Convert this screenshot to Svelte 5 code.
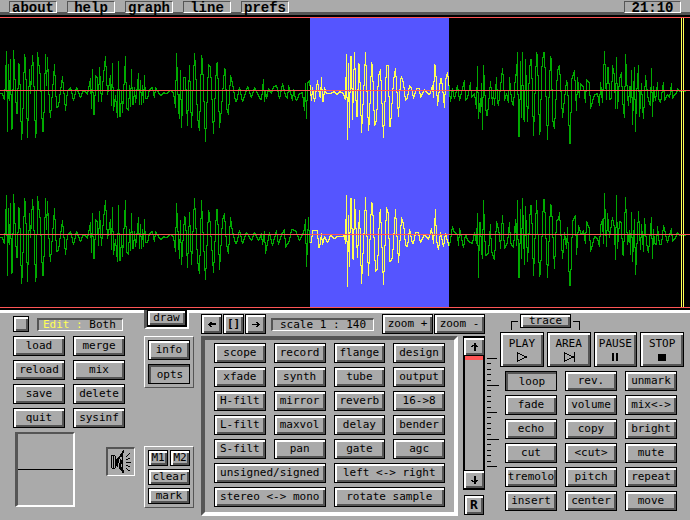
<script>
  const menus = ['about', 'help', 'graph', 'line', 'prefs'];
  const files = ['load', 'merge', 'reload', 'mix', 'save', 'delete', 'quit', 'sysinf'];
  const tools = [
    'scope', 'record', 'flange', 'design',
    'xfade', 'synth', 'tube', 'output',
    'H-filt', 'mirror', 'reverb', '16->8',
    'L-filt', 'maxvol', 'delay', 'bender',
    'S-filt', 'pan', 'gate', 'agc'
  ];
  const wideTools = ['unsigned/signed', 'left <-> right', 'stereo <-> mono', 'rotate sample'];
  const edits = [
    'loop', 'rev.', 'unmark',
    'fade', 'volume', 'mix<->',
    'echo', 'copy', 'bright',
    'cut', '<cut>', 'mute',
    'tremolo', 'pitch', 'repeat',
    'insert', 'center', 'move'
  ];
  const transport = [
    ['PLAY', 'M1 1V9L10 5Z'],
    ['AREA', 'M1 1V9L10 5ZM11 0V10'],
    ['PAUSE', 'M3 1V9M4 1V9M7 1V9M8 1V9'],
    ['STOP', 'M2 2H9V8H2ZM3 3H8V7H3ZM4 4H7V6H4ZM4 5H7']
  ];

  // Samples as "x,amplitude" pairs, amplitude growing downwards from the axis.
  const intro =
    '0,3 2,3 4,9 5,-11 6,-39 7,41 8,-26 9,10 10,-31 11,39 12,37 13,-40 14,-23 16,23 17,23 18,-27 19,-25 21,49 22,36 24,-36 25,-30 27,47 29,-21 30,3 32,-35 33,-21 35,47 36,38 37,-38 38,-29 40,-13 42,41 43,41 45,-36 46,-5 47,-33 49,16 50,27 54,-26 56,17 58,16 60,0 62,-14 65,20 67,0 70,-3 73,10 76,-3 80,7 83,0 85,1 87,4 90,-12 91,18 92,-21 93,24 94,24 95,-15 97,-13 98,11 99,-23 101,11 103,-16 105,-34 106,-14 107,4 110,-15 111,15 112,-27 113,20 115,5 117,27 118,-29 119,26 120,26 121,0 122,22 124,-15 125,-34 126,17 128,20 129,-5 130,16 131,-21 132,14 133,14 134,-3 135,12 137,-5 138,-17 139,14 140,-10 141,14 142,-5 143,12 144,-15 145,8 147,8 149,-1 152,-3 154,7 155,-3 158,2 161,5 163,2 166,3 170,0 173,2 174,9 175,17';
  const left =
    intro +
    ' 176,-37 178,18 179,28 180,-20 181,37 183,-13 185,-13 187,35 189,-25 191,37 194,-37 195,-23 197,26 199,40 201,-35 202,-30 205,51 208,-26 210,-24 213,43 216,-27 217,-28 219,37 221,18 224,-22 225,-20 226,17 228,24 230,-15 232,-7 235,11 236,11 239,-3 242,11 247,-4 251,7 254,-3 257,3 260,9 261,9 263,-11 264,11 265,0 266,8 268,-2 271,3 273,-4 276,-5 279,8 282,-7 285,5 287,8 288,-5 292,10 293,-1 295,8 296,10 299,3 302,2 304,20 305,-7 306,28 307,-8 309,-10 310,0 311,10 312,-3 314,11 316,-3 317,-10 319,4 320,7 321,-13 322,11 323,11 324,-3 326,3 330,3 334,1 336,4 339,1 343,3 345,9 346,-36 347,49 348,-27 349,37 350,-34 351,-34 352,29 354,-38 356,26 357,25 358,-27 359,-25 361,42 364,-15 365,-38 368,40 369,27 371,-28 372,-24 374,35 376,30 378,-15 380,-21 383,47 386,-25 388,-25 389,36 390,36 393,-10 395,-22 398,26 400,-10 401,-14 403,-8 405,10 407,7 409,-5 411,-3 413,8 416,-2 419,-2 420,7 424,-1 429,4 432,-5 433,7 434,-26 435,-24 437,15 440,-12 441,-12 444,17 445,-10 447,-18 448,-10 450,11 452,-2 454,8 457,-5 459,10 464,-10 465,10 467,7 470,-8 471,7 474,3 476,18 477,-24 478,28 479,13 480,22 481,-7 482,39 483,-25 485,15 486,25 487,25 490,-9 492,14 493,0 494,15 496,-13 497,10 498,15 502,-22 503,-10 504,10 506,3 508,12 509,-13 511,10 513,15 515,-16 516,-15 517,-38 518,46 519,46 520,-29 521,27 522,-38 523,27 524,31 525,-31 527,31 529,-20 530,-31 531,-31 533,45 536,-38 537,-35 539,44 540,38 541,-20 543,-38 544,-38 547,49 550,-34 551,-31 552,28 554,38 557,-20 559,-25 562,27 566,-10 567,-7 568,17 569,53 570,53 571,-10 574,-20 576,20 577,-13 579,7 580,-7 583,-4 585,12 586,-11 589,-8 590,18 592,11 594,4 597,3 599,15 600,-8 602,12 604,-39 605,-14 606,9 607,-23 608,-23 609,9 611,7 612,-25 614,-15 615,18 616,-33 617,18 619,-12 621,-18 622,10 624,27 625,-36 627,5 628,15 629,-4 630,12 631,-20 632,34 634,-23 635,41 636,5 638,-25 639,26 641,-7 642,15 643,28 645,-15 647,4 648,10 650,15 651,-22 652,26 653,-4 655,10 657,-8 658,8 660,12 663,-8 664,10 667,4 669,7 671,-7 672,8 674,4 676,3 677,-2 680,1 690,0';
  const right =
    intro +
    ' 176,-31 177,-12 179,24 180,-14 181,30 184,-18 185,-16 187,33 189,-22 191,30 194,-36 197,25 199,39 201,-34 202,-12 205,45 208,-24 209,-20 213,38 216,-25 217,-25 219,35 222,-14 224,-21 226,10 228,19 230,-17 232,-3 235,9 236,9 239,-4 242,9 246,-2 251,6 254,-2 258,6 261,-1 262,10 264,-3 265,19 267,8 269,-2 272,11 276,-4 278,10 281,0 284,-5 285,13 289,6 291,-5 295,-4 299,6 302,0 304,-6 305,-15 306,32 308,-17 309,8 311,8 312,-4 317,-4 318,12 319,13 321,-1 322,10 324,2 327,8 330,1 334,4 337,2 341,2 344,1 345,9 346,-39 347,52 348,-19 349,32 350,-36 351,-36 352,23 353,25 354,-35 357,23 359,-24 361,49 364,-11 365,-37 368,41 371,-32 372,-30 375,37 377,34 379,-20 380,-25 383,50 386,-27 388,-20 389,27 390,27 392,23 395,-25 398,28 401,-17 403,-11 405,10 407,12 409,-5 412,9 413,9 415,-2 418,-2 420,8 424,0 428,5 431,-6 433,9 435,-25 436,6 438,15 440,-2 443,12 445,-1 448,10 449,11 452,-8 454,-2 457,0 458,11 459,-6 463,13 465,0 468,7 472,9 474,-2 476,9 477,-21 478,43 479,-12 480,-12 481,15 482,24 483,-34 485,21 488,18 490,-10 491,17 494,25 496,-13 499,0 500,14 502,-19 504,14 507,8 509,-12 510,8 513,13 515,-15 516,11 517,-34 518,43 519,43 520,-25 521,24 522,-36 524,30 525,-28 527,27 530,-29 531,-29 533,41 536,-34 537,-14 539,42 540,38 543,-35 544,-35 547,43 550,-30 551,-28 554,34 556,-14 558,-15 559,-22 562,24 564,-2 566,14 567,-7 569,51 570,51 572,-13 575,-19 576,20 578,-9 581,0 583,-4 585,9 586,-13 589,-6 590,17 592,10 594,2 597,4 599,12 600,-8 602,-15 603,9 604,-41 605,-10 606,12 607,-21 609,3 612,-17 614,-6 615,25 616,-39 617,14 619,-13 621,-12 622,19 623,21 625,-37 627,10 629,-4 630,20 631,-22 632,27 634,-15 635,40 638,-23 640,15 641,-10 643,17 644,-16 646,8 648,18 651,-17 652,24 653,-5 654,9 656,10 657,-8 659,10 661,10 663,-9 666,4 667,8 669,0 671,-6 672,7 675,3 677,-2 680,1 690,0';

  // One vertical bar per column, covering the signal's range within it.
  function trace(data, axis) {
    const points = data.split(' ').map((pair) => pair.split(',').map(Number));
    const amps = [];
    for (let i = 1; i < points.length; i++) {
      const [x0, a0] = points[i - 1];
      const [x1, a1] = points[i];
      for (let x = x0; x < x1; x++) amps[x] = a0 + ((a1 - a0) * (x - x0)) / (x1 - x0);
    }
    return amps
      .map((amp, x) => {
        const range = [amp, (amp + (amps[x - 1] ?? amp)) / 2, (amp + (amps[x + 1] ?? amp)) / 2];
        const top = axis + Math.round(Math.min(...range));
        const bottom = axis + 1 + Math.round(Math.max(...range));
        return `M${x + 0.5} ${top}V${bottom}`;
      })
      .join('');
  }
  const channels = [trace(left, 90), trace(right, 234)];

  // Fader scale: a long mark every fifth step.
  const ticks = Array.from({ length: 21 }, (_, i) => ({
    y: Math.round(i * 5.4),
    w: i % 5 ? 4 : i % 10 ? 12 : 10
  }));

  let looping = $state(true);
  let level = $state(0);
</script>

<div class="app">
  <nav class="menubar">
    {#each menus as name}
      <button class="menu">{name}</button>
    {/each}
    <time class="clock">21:10</time>
  </nav>

  <svg class="wave" viewBox="0 15 690 295" preserveAspectRatio="none" role="img" aria-label="Stereo waveform">
    <defs>
      <clipPath id="marked"><rect x="310" y="18" width="139" height="289" /></clipPath>
    </defs>
    <rect y="15" width="690" height="295" fill="#000" />
    <rect x="310" y="18" width="139" height="289" fill="#55f" />
    {#each channels as d}
      <path {d} stroke="#0a0" />
      <path {d} stroke="#ff5" clip-path="url(#marked)" />
    {/each}
    <path d="M681.5 18V307M683.5 18V307" stroke="#ff5" />
    <path d="M0 17.5H690M0 90.5H690M0 234.5H690M0 307.5H690" stroke="#f55" />
  </svg>

  <main class="console">
    <section class="files">
      <div class="mode">
        <button class="square" aria-label="Switch channel"></button>
        <div class="readout"><span class="key">Edit :</span> Both</div>
      </div>
      <div class="file-grid">
        {#each files as name}<button>{name}</button>{/each}
      </div>
      <div class="meters">
        <div class="scope"></div>
        <button class="speaker" aria-label="Speaker">
          <svg width="21" height="24" viewBox="0 0 21 24">
            <path d="M0.5 5V18M1 5.5H4M1 18.500H4M2.500 5V19M4.500 6V18M5.500 9V16M6.500 8V17M7.500 7V13M8.500 6V9M8.500 13V19M9.500 4V7M9.500 15V20M10.500 3V7M10.500 10V14M10.500 17V21M11.500 1V23M12.500 0V3M12.500 20V23M9.500 9V16" />
            <path d="M15 6.500H16M16 5.500H17M17 4.500H18M18 3.500H19M15 9.500H17M17 8.500H19M15 12.500H20M15 15.500H17M17 16.500H19M15 18.500H16M16 19.500H17M17 20.500H19" />
          </svg>
        </button>
      </div>
    </section>

    <section class="views">
      <div class="draw-slot"><button>draw</button></div>
      <div class="group">
        <button>info</button>
        <button class="pressed">opts</button>
      </div>
      <div class="group marks">
        <button>M1</button><button>M2</button>
        <button class="full">clear</button>
        <button class="full">mark</button>
      </div>
    </section>

    <section class="process">
      <div class="toolbar">
        <button class="step" aria-label="Scroll left">
          <svg width="10" height="9" viewBox="0 0 10 9"><path d="M1 4.500H9M2 3.500H9M2 5.500H4M3 2.500H5M3 6.500H5" /></svg>
        </button>
        <button class="step bold">[]</button>
        <button class="step" aria-label="Scroll right">
          <svg width="10" height="9" viewBox="0 0 10 9"><path d="M1 4.500H9M6 3.500H8M6 5.500H8M5 2.500H7M5 6.500H7" /></svg>
        </button>
        <div class="readout scale">scale 1 : 140</div>
        <button class="zoom">zoom +</button>
        <button class="zoom">zoom -</button>
      </div>
      <div class="work">
        <div class="panel">
          {#each tools as name}<button>{name}</button>{/each}
          {#each wideTools as name}<button class="wide">{name}</button>{/each}
        </div>
        <div class="side">
          <div class="fader">
            <button aria-label="Level up">
              <svg width="9" height="10" viewBox="0 0 9 10"><path d="M4 1V9M5 1V9M2 3.500H7M1 4.500H3M6 4.500H8" /></svg>
            </button>
            <input type="range" min="0" max="100" bind:value={level} aria-label="Level" />
            <button aria-label="Level down">
              <svg width="9" height="10" viewBox="0 0 9 10"><path d="M4 1V9M5 1V9M2 6.500H7M1 5.500H3M6 5.500H8" /></svg>
            </button>
          </div>
          <button class="reset">R</button>
        </div>
      </div>
    </section>

    <section class="playback">
      <svg class="ticks" width="13" height="109" viewBox="0 0 13 109">
        {#each ticks as t}<rect y={t.y} width={t.w} height="1" />{/each}
      </svg>
      <div class="deck">
        <div class="trace">
          <span class="hook"></span>
          <button>trace</button>
          <span class="hook end"></span>
        </div>
        <div class="transport">
          {#each transport as [name, icon]}
            <button>
              {name}
              <svg width="12" height="10" viewBox="0 0 12 10"><path d={icon} transform="translate(0.5 0)" /></svg>
            </button>
          {/each}
        </div>
        <div class="edits">
          {#each edits as name}
            {#if name === 'loop'}
              <button class:pressed={looping} onclick={() => (looping = !looping)}>{name}</button>
            {:else}
              <button>{name}</button>
            {/if}
          {/each}
        </div>
      </div>
    </section>
  </main>
</div>

<style>
  :global(body) {
    margin: 0;
    background: #aaa;
  }
  .app {
    font: 11px/12px 'DejaVu Sans Mono', 'Liberation Mono', monospace;
    color: #000;
  }
  .app,
  .app * {
    box-sizing: border-box;
  }
  button {
    display: flex;
    align-items: center;
    justify-content: center;
    min-width: 0;
    height: 20px;
    margin: 0;
    padding: 0;
    border: 1px solid #000;
    border-radius: 0;
    background: #aaa;
    box-shadow: inset 2px 2px #fff, inset -2px -2px #555;
    font: inherit;
    color: inherit;
    white-space: nowrap;
  }
  button.pressed {
    box-shadow: inset 2px 2px #555;
    padding: 2px 0 0 2px;
  }
  button svg path {
    fill: none;
    stroke: #000;
    shape-rendering: crispEdges;
  }

  .menubar {
    display: flex;
    gap: 10px;
    height: 15px;
    padding: 1px 9px 0;
    border-bottom: 3px solid #555;
    background: #aaa;
    font: bold 14px/12px 'Liberation Mono', monospace;
  }
  .menu,
  .clock {
    width: 48px;
    height: 12px;
    border: 1px solid;
    border-color: #555 #fff #fff #555;
    background: #aaa;
    box-shadow: none;
    text-align: center;
  }
  .menu {
    align-items: flex-start;
  }
  .clock {
    width: 57px;
    margin-left: auto;
  }

  .wave {
    display: block;
    width: 100%;
    height: 295px;
    shape-rendering: crispEdges;
  }

  .console {
    display: grid;
    grid-template-columns: 131fr 57fr 286fr 197fr;
    padding: 0 6px 4px 13px;
    border-top: 3px solid #fff;
  }
  .readout {
    height: 13px;
    padding: 0 4px;
    border: 1px solid;
    border-width: 2px 1px 1px 2px;
    border-color: #555 #fff #fff #555;
    line-height: 10px;
    white-space: pre;
  }
  .key {
    color: #ff5;
  }

  .files {
    padding-right: 7px;
  }
  .mode {
    display: flex;
    align-items: center;
    gap: 8px;
    height: 16px;
    margin: 3px 14px 4px 0;
  }
  .square {
    width: 16px;
    height: 16px;
  }
  .mode .readout {
    flex: 1;
  }
  .file-grid {
    display: grid;
    grid-template-columns: 1fr 1fr;
    gap: 4px 8px;
    margin-right: 12px;
  }
  .meters {
    display: flex;
    justify-content: space-between;
    margin: 4px 2px 0;
  }
  .scope {
    width: 60px;
    height: 75px;
    border: 1px solid;
    border-width: 2px 2px 2px 3px;
    border-color: #555 #fff #fff #555;
    background: linear-gradient(#000, #000) 0 50% / 100% 1px no-repeat;
  }
  .speaker {
    width: 29px;
    height: 29px;
    margin-top: 15px;
    border: 2px solid;
    border-width: 2px 1px 1px 2px;
    border-color: #555 #fff #fff #555;
    box-shadow: none;
  }

  .views {
    padding-right: 7px;
  }
  .draw-slot {
    height: 19px;
    margin: -3px 5px 7px 0;
    border: 2px solid;
    border-width: 0 2px 2px 3px;
    border-color: #555 #fff #fff #555;
    background: #aaa;
  }
  .draw-slot button {
    width: 100%;
    height: 17px;
    border-width: 1px 2px 2px 1px;
  }
  .group {
    display: grid;
    gap: 4px;
    padding: 3px;
    border: 1px solid;
    border-color: #fff #555 #555 #fff;
  }
  .marks {
    grid-template-columns: 1fr 1fr;
    gap: 3px 2px;
    margin-top: 58px;
  }
  .marks button {
    height: 16px;
  }
  .full {
    grid-column: span 2;
  }

  .process {
    padding-right: 2px;
  }
  .toolbar {
    display: flex;
    align-items: center;
    gap: 1px;
    margin: 1px 0 2px;
  }
  .step {
    width: 21px;
  }
  .bold,
  .reset {
    font-weight: bold;
  }
  .scale {
    flex: 1;
    margin: 0 7px 0 4px;
    padding: 0;
    text-align: center;
  }
  .zoom {
    width: 51px;
  }
  .work {
    display: flex;
    gap: 5px;
  }
  .panel {
    display: grid;
    flex: 1;
    grid-template-columns: repeat(4, 1fr);
    gap: 4px 8px;
    padding: 3px 9px 5px;
    border: 4px solid;
    border-color: #555 #fff #fff #555;
  }
  .wide {
    grid-column: span 2;
  }
  .side {
    width: 22px;
  }
  .fader {
    display: flex;
    flex-direction: column;
    height: 154px;
    padding: 1px 0;
    border: 1px solid #000;
    background: #000;
  }
  .fader button {
    flex: none;
    width: 100%;
    height: 18px;
    border-width: 0 0 1px;
  }
  .fader button:last-child {
    border-width: 1px 0 0;
  }
  .fader input {
    flex: 1;
    width: auto;
    min-height: 0;
    margin: 0 1px;
    writing-mode: vertical-lr;
    appearance: none;
    background: #aaa;
  }
  .fader input::-webkit-slider-thumb {
    appearance: none;
    width: 18px;
    height: 4px;
    border: 0;
    background: #f55;
  }
  .reset {
    width: 20px;
    margin: 5px 0 0 1px;
    font-size: 13px;
  }

  .playback {
    display: flex;
  }
  .ticks {
    flex: none;
    margin-top: 45px;
    shape-rendering: crispEdges;
  }
  .deck {
    flex: 1;
  }
  .trace {
    display: flex;
    gap: 2px;
    height: 18px;
    margin: 1px 0 0 11px;
  }
  .trace button {
    width: 51px;
    height: 14px;
  }
  .hook {
    width: 7px;
    height: 9px;
    margin-top: 7px;
    border: solid #000;
    border-width: 1px 0 0 1px;
  }
  .hook.end {
    border-width: 1px 1px 0 0;
  }
  .transport {
    display: grid;
    grid-template-columns: repeat(4, 1fr);
    gap: 3px;
    margin-bottom: 4px;
  }
  .transport button {
    flex-direction: column;
    gap: 2px;
    height: 35px;
  }
  .edits {
    display: grid;
    grid-template-columns: repeat(3, 1fr);
    gap: 4px 8px;
    margin: 0 7px 0 5px;
  }
</style>
